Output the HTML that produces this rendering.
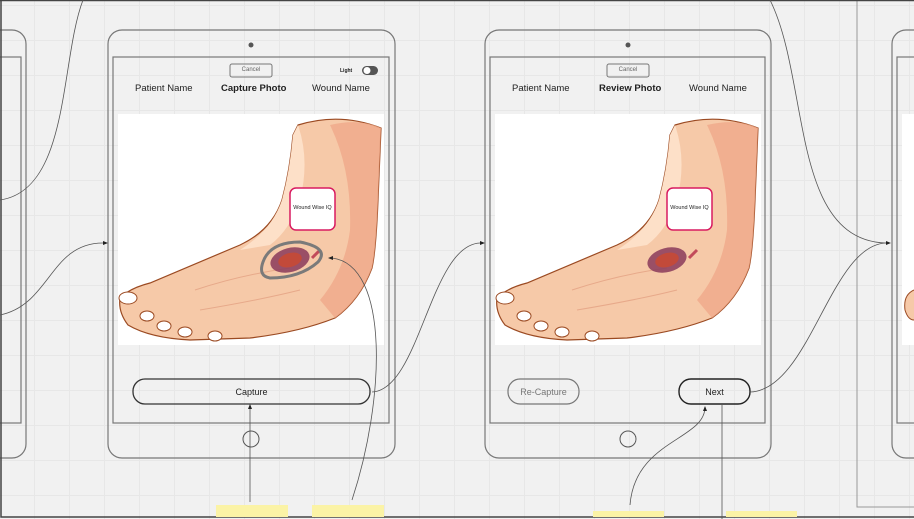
<!DOCTYPE html>
<html><head><meta charset="utf-8"><style>
html,body{margin:0;padding:0}
body{width:914px;height:519px;overflow:hidden;position:relative;background:#f1f1f1;
background-image:linear-gradient(#e7e7e7 1px,transparent 1px),linear-gradient(90deg,#e7e7e7 1px,transparent 1px);background-size:35px 35px;background-position:-1px 5px;font-family:"Liberation Sans",sans-serif;color:#222}
.t{position:absolute;font-size:9px;white-space:nowrap;text-align:center}
svg{position:absolute;left:0;top:0}
</style></head><body>
<svg width="914" height="519" viewBox="0 0 914 519">
<defs>
<g id="foot">
<rect x="118" y="114" width="266" height="231" fill="#fff"/>
<path d="M298,125 Q340,112 381,128 L378,200 Q376,250 372,268 Q360,300 335,318 Q300,332 250,338 L190,340 Q150,338 128,325 Q118,312 120,298 Q130,288 150,283 Q200,262 240,245 Q272,230 282,200 Q290,170 293,135 Z" fill="#f6c9a8" stroke="#9b4a22" stroke-width="1.2"/>
<path d="M330,125 Q360,118 381,128 L378,200 Q376,250 372,268 Q360,300 335,318 L320,300 Q345,270 350,230 Q352,170 330,125Z" fill="#f0a98a" opacity=".8"/>
<path d="M298,125 Q310,160 300,200 Q290,230 270,245 L240,250 Q272,230 282,200 Q290,170 293,135Z" fill="#fde0c8"/>
<g fill="#fff" stroke="#9b4a22" stroke-width="1">
<ellipse cx="128" cy="298" rx="9" ry="6"/><ellipse cx="147" cy="316" rx="7" ry="5"/>
<ellipse cx="164" cy="326" rx="7" ry="5"/><ellipse cx="185" cy="332" rx="7" ry="5"/><ellipse cx="215" cy="336" rx="7" ry="5"/></g>
<path d="M195,290 Q240,275 290,268" stroke="#e7a98a" fill="none"/>
<path d="M200,310 Q260,300 300,290" stroke="#e7a98a" fill="none"/>
<ellipse cx="290" cy="260" rx="20" ry="12" fill="#8a3a5a" opacity=".85" transform="rotate(-15 290 260)"/>
<ellipse cx="290" cy="260" rx="12" ry="7" fill="#c24a3a" transform="rotate(-15 290 260)"/>
<path d="M312,258 L320,250" stroke="#c24a5a" stroke-width="3"/>
<rect x="290" y="188" width="45" height="42" rx="6" fill="#fff" stroke="#d81b60" stroke-width="1.5"/>
</g>
</defs>
<rect x="-60" y="30" width="86" height="428" rx="14" fill="none" stroke="#777" stroke-width="1.2"/>
<rect x="-60" y="57" width="81" height="366" fill="none" stroke="#777" stroke-width="1.2"/>
<rect x="108" y="30" width="287" height="428" rx="14" fill="none" stroke="#777" stroke-width="1.2"/>
<rect x="113" y="57" width="276" height="366" fill="none" stroke="#777" stroke-width="1.2"/>
<circle cx="251" cy="45" r="2.5" fill="#555"/>
<circle cx="251" cy="439" r="8" fill="none" stroke="#555"/>
<use href="#foot"/>
<path d="M263,262 Q270,242 300,242 Q330,248 318,262 Q300,278 270,278 Q258,276 263,262Z" fill="none" stroke="#7a7a7a" stroke-width="3"/>
<rect x="230" y="64" width="42" height="13" rx="2" fill="none" stroke="#777"/>
<rect x="362" y="66" width="16" height="9" rx="4.5" fill="#555"/><circle cx="367" cy="70.5" r="3.5" fill="#fff"/>
<rect x="133" y="379" width="237" height="25" rx="12" fill="none" stroke="#333" stroke-width="1.3"/>
<rect x="485" y="30" width="286" height="428" rx="14" fill="none" stroke="#777" stroke-width="1.2"/>
<rect x="490" y="57" width="275" height="366" fill="none" stroke="#777" stroke-width="1.2"/>
<circle cx="628" cy="45" r="2.5" fill="#555"/>
<circle cx="628" cy="439" r="8" fill="none" stroke="#555"/>
<use href="#foot" x="377"/>
<rect x="607" y="64" width="42" height="13" rx="2" fill="none" stroke="#777"/>
<rect x="508" y="379" width="71" height="25" rx="12" fill="none" stroke="#777" stroke-width="1.2"/>
<rect x="679" y="379" width="71" height="25" rx="12" fill="none" stroke="#222" stroke-width="1.4"/>
<rect x="892" y="30" width="80" height="428" rx="14" fill="none" stroke="#777" stroke-width="1.2"/>
<rect x="897" y="57" width="80" height="366" fill="none" stroke="#777" stroke-width="1.2"/>
<rect x="902" y="114" width="20" height="231" fill="#fff"/>
<path d="M914,290 Q903,295 905,310 Q908,320 914,320" fill="#f6c9a8" stroke="#9b4a22"/>
<path d="M857,0 V507 H914" fill="none" stroke="#999"/>
<path d="M1,0 V517 H914 M0,0.5 H914" fill="none" stroke="#444" stroke-width="1.5"/>
<rect x="216" y="505" width="72" height="12" fill="#fbf3a6"/>
<rect x="312" y="505" width="72" height="12" fill="#fbf3a6"/>
<rect x="593" y="511" width="71" height="6" fill="#fbf3a6"/>
<rect x="726" y="511" width="71" height="6" fill="#fbf3a6"/>
<g fill="none" stroke="#555" stroke-width=".8">
<path d="M0,200 C70,190 60,60 83,0"/>
<path d="M0,315 C50,305 50,243 103,243"/>
<path d="M250,502 V405"/>
<path d="M352,500 C385,400 390,265 332,258"/>
<path d="M372,392 C420,390 430,245 480,243"/>
<path d="M630,505 C635,440 705,440 705,407"/>
<path d="M722,405 V519"/>
<path d="M750,392 C810,390 830,245 886,243"/>
<path d="M770,0 C810,80 790,240 886,243"/>
</g>
<g fill="#222">
<path d="M108,243 l-5,-2 v4z"/><path d="M485,243 l-5,-2 v4z"/><path d="M891,243 l-5,-2 v4z"/>
<path d="M250,404 l-2,5 h4z"/><path d="M705,406 l-2,5 h4z"/><path d="M328,258 l5,-2 v4z"/>
</g>
</svg>
<div class="t" style="left:230px;top:67px;width:42px;font-size:6px;color:#666">Cancel</div>
<div class="t" style="left:340px;top:68px;font-size:5px;font-weight:bold">Light</div>
<div class="t" style="left:135px;top:83px;font-size:9.5px">Patient Name</div>
<div class="t" style="left:221px;top:83px;font-size:9.5px;font-weight:bold">Capture Photo</div>
<div class="t" style="left:312px;top:83px;font-size:9.5px">Wound Name</div>
<div class="t" style="left:290px;top:205px;width:45px;font-size:5.5px">Wound Wise IQ</div>
<div class="t" style="left:133px;top:387px;width:237px;font-size:9px">Capture</div>
<div class="t" style="left:607px;top:67px;width:42px;font-size:6px;color:#666">Cancel</div>
<div class="t" style="left:512px;top:83px;font-size:9.5px">Patient Name</div>
<div class="t" style="left:599px;top:83px;font-size:9.5px;font-weight:bold">Review Photo</div>
<div class="t" style="left:689px;top:83px;font-size:9.5px">Wound Name</div>
<div class="t" style="left:667px;top:205px;width:45px;font-size:5.5px">Wound Wise IQ</div>
<div class="t" style="left:508px;top:387px;width:71px;font-size:9px;color:#777">Re-Capture</div>
<div class="t" style="left:679px;top:387px;width:71px;font-size:9px">Next</div>
</body></html>
